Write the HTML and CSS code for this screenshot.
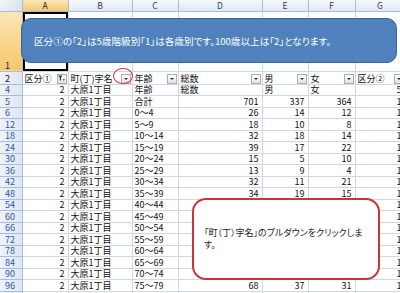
FILE: index.html
```html
<!DOCTYPE html>
<html lang="ja">
<head>
    <meta charset="UTF-8">
    <title>オートフィルタ - 大原1丁目</title>
    <link rel="stylesheet" href="styles.css">
</head>
<body>

<div class="sheet">
    <table class="grid">
        <colgroup>
            <col class="w-rh">
            <col class="w-a">
            <col class="w-b">
            <col class="w-c">
            <col class="w-d">
            <col class="w-e">
            <col class="w-f">
            <col class="w-g">
        </colgroup>
        <thead>
            <tr>
                <th class="corner"></th>
                <th class="sel">A</th>
                <th>B</th>
                <th>C</th>
                <th>D</th>
                <th>E</th>
                <th>F</th>
                <th>G</th>
            </tr>
        </thead>
        <tbody>
            <tr class="r-tall">
                <th class="sel plain">1</th>
                <td class="active"></td><td></td><td></td><td></td><td></td><td></td><td></td>
            </tr>
            <tr class="r-head">
                <th class="plain">2</th>
                <td><div class="fh">区分①<b class="fb on"><svg width="7" height="7" viewBox="0 0 7 7"><path d="M0 0.5h4.5L3 2.6v3.2L1.8 5V2.6z" fill="#333"/><path d="M4.6 4.2h2.4L5.8 5.8z" fill="#333"/></svg></b></div></td>
                <td><div class="fh">町(丁)字名<b class="fb"></b></div></td>
                <td><div class="fh">年齢<b class="fb"></b></div></td>
                <td><div class="fh">総数<b class="fb"></b></div></td>
                <td><div class="fh">男<b class="fb"></b></div></td>
                <td><div class="fh">女<b class="fb"></b></div></td>
                <td><div class="fh">区分②<b class="fb"></b></div></td>
            </tr>
            <tr><th>4</th><td class="n">2</td><td>大原1丁目</td><td>年齢</td><td>総数</td><td>男</td><td>女</td><td class="n">5</td></tr>
            <tr><th>5</th><td class="n">2</td><td>大原1丁目</td><td>合計</td><td class="n">701</td><td class="n">337</td><td class="n">364</td><td class="n">1</td></tr>
            <tr><th>6</th><td class="n">2</td><td>大原1丁目</td><td>0～4</td><td class="n">26</td><td class="n">14</td><td class="n">12</td><td class="n">1</td></tr>
            <tr><th>12</th><td class="n">2</td><td>大原1丁目</td><td>5～9</td><td class="n">18</td><td class="n">10</td><td class="n">8</td><td class="n">1</td></tr>
            <tr><th>18</th><td class="n">2</td><td>大原1丁目</td><td>10～14</td><td class="n">32</td><td class="n">18</td><td class="n">14</td><td class="n">1</td></tr>
            <tr><th>24</th><td class="n">2</td><td>大原1丁目</td><td>15～19</td><td class="n">39</td><td class="n">17</td><td class="n">22</td><td class="n">1</td></tr>
            <tr><th>30</th><td class="n">2</td><td>大原1丁目</td><td>20～24</td><td class="n">15</td><td class="n">5</td><td class="n">10</td><td class="n">1</td></tr>
            <tr><th>36</th><td class="n">2</td><td>大原1丁目</td><td>25～29</td><td class="n">13</td><td class="n">9</td><td class="n">4</td><td class="n">1</td></tr>
            <tr><th>42</th><td class="n">2</td><td>大原1丁目</td><td>30～34</td><td class="n">32</td><td class="n">11</td><td class="n">21</td><td class="n">1</td></tr>
            <tr><th>48</th><td class="n">2</td><td>大原1丁目</td><td>35～39</td><td class="n">34</td><td class="n">19</td><td class="n">15</td><td class="n">1</td></tr>
            <tr><th>54</th><td class="n">2</td><td>大原1丁目</td><td>40～44</td><td></td><td></td><td></td><td class="n">1</td></tr>
            <tr><th>60</th><td class="n">2</td><td>大原1丁目</td><td>45～49</td><td></td><td></td><td></td><td class="n">1</td></tr>
            <tr><th>66</th><td class="n">2</td><td>大原1丁目</td><td>50～54</td><td></td><td></td><td></td><td class="n">1</td></tr>
            <tr><th>72</th><td class="n">2</td><td>大原1丁目</td><td>55～59</td><td></td><td></td><td></td><td class="n">1</td></tr>
            <tr><th>78</th><td class="n">2</td><td>大原1丁目</td><td>60～64</td><td></td><td></td><td></td><td class="n">1</td></tr>
            <tr><th>84</th><td class="n">2</td><td>大原1丁目</td><td>65～69</td><td></td><td></td><td></td><td class="n">1</td></tr>
            <tr><th>90</th><td class="n">2</td><td>大原1丁目</td><td>70～74</td><td></td><td></td><td></td><td class="n">1</td></tr>
            <tr><th>96</th><td class="n">2</td><td>大原1丁目</td><td>75～79</td><td class="n">68</td><td class="n">37</td><td class="n">31</td><td class="n">1</td></tr>
            <tr><th></th><td></td><td></td><td></td><td></td><td></td><td></td><td></td></tr>
        </tbody>
    </table>

    <!-- 吹き出し（図形） -->
    <div class="note note-blue">区分①の「2」は5歳階級別「1」は各歳別です。100歳以上は「2」となります。</div>
    <div class="note note-red">「町（丁）字名」のプルダウンをクリックしま<br>す。</div>
    <div class="ring"></div>
</div>

</body>
</html>
```

FILE: styles.css
```css
body {
    margin: 0;
    background: #fff;
    font-family: "Noto Sans CJK JP", sans-serif;
    color: #111;
}
.sheet {
    position: relative;
    width: 400px;
    height: 293px;
    overflow: hidden;
}

/* ワークシート */
.grid {
    border-collapse: collapse;
    table-layout: fixed;
    width: 405px;
    font-size: 9px;
    line-height: 10px;
}
.w-rh { width: 22px; }
.w-a { width: 46px; }
.w-b { width: 64px; }
.w-c { width: 46px; }
.w-d { width: 84px; }
.w-e { width: 46px; }
.w-f { width: 47px; }
.w-g { width: 50px; }

.grid tr { height: 11.5px; }
.grid thead tr { height: 11px; }
.grid tr.r-tall { height: 60px; }
.grid tr.r-head { height: 13px; }

.grid td {
    border-right: 1px solid #d0d7e5;
    border-bottom: 1px solid #d0d7e5;
    padding: 0 3px 0 2px;
    white-space: nowrap;
    overflow: hidden;
    vertical-align: bottom;
}
.grid td.n {
    text-align: right;
}
.grid th {
    background: linear-gradient(#f6f9fc, #dfe7f2);
    border-right: 1px solid #a9bdd6;
    border-bottom: 1px solid #a9bdd6;
    font-weight: normal;
    padding: 0;
    white-space: nowrap;
    overflow: hidden;
}
.grid thead th {
    font-size: 8.5px;
    color: #30415a;
    text-align: center;
    vertical-align: middle;
}
.grid tbody th {
    text-align: left;
    padding-left: 5px;
    color: #3656a8;
    vertical-align: bottom;
    background: linear-gradient(90deg, #eef3fa, #dde6f2);
}
.grid tbody th.plain {
    color: #222;
}
.grid th.sel {
    background: linear-gradient(#fbe6b8, #f5c76b);
    color: #222;
}
.grid th.corner {
    background: linear-gradient(135deg, #f3f6fa, #d6dfeb);
}

/* 選択中のセル A1 */
.grid td.active {
    box-shadow: inset 0 0 0 2px #000;
}

/* フィルタ見出し */
.r-head td {
    padding-right: 1px;
}
.fh {
    display: flex;
    align-items: center;
    justify-content: space-between;
}
.fb {
    flex: none;
    width: 8px;
    height: 8px;
    border: 1px solid #a4aebd;
    background: linear-gradient(#ffffff, #dde2e9);
    display: flex;
    align-items: center;
    justify-content: center;
}
.fb::after {
    content: "";
    border-left: 2px solid transparent;
    border-right: 2px solid transparent;
    border-top: 2px solid #333;
}
.fb.on::after {
    display: none;
}

/* 吹き出し */
.note {
    position: absolute;
    display: flex;
    align-items: center;
    box-sizing: border-box;
    font-feature-settings: "palt";
}
.note-blue {
    left: 21px;
    top: 18px;
    width: 376px;
    height: 45px;
    padding-left: 12px;
    background: #4f81bd;
    border: 1px solid #3a6596;
    border-radius: 10px;
    color: #fff;
    font-size: 9.6px;
}
.note-red {
    left: 192px;
    top: 198px;
    width: 188px;
    height: 82px;
    padding-left: 10px;
    background: #fff;
    border: 2px solid #c8343c;
    border-radius: 14px;
    color: #222;
    font-size: 9px;
    line-height: 12px;
}
.ring {
    position: absolute;
    left: 113px;
    top: 68px;
    width: 20px;
    height: 16px;
    box-sizing: border-box;
    border: 1.5px solid #d8303a;
    border-radius: 50%;
}
```
